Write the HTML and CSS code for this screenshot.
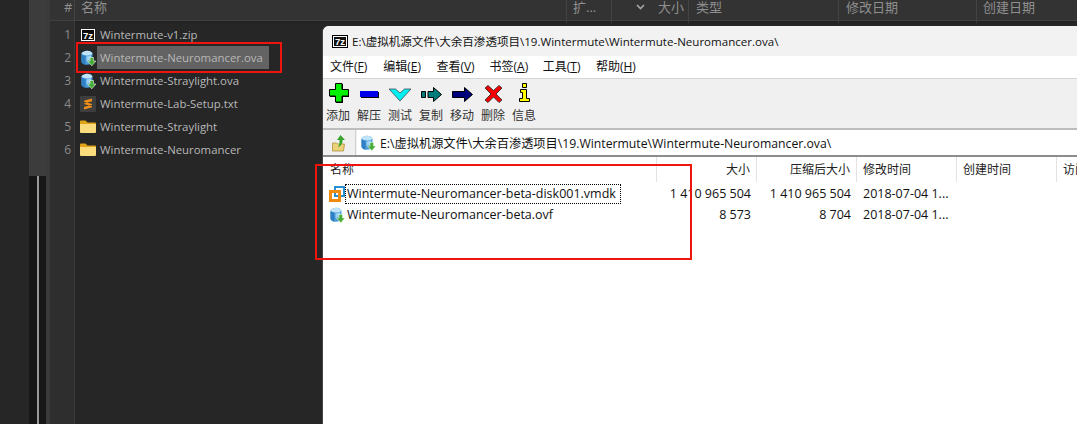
FILE: index.html
```html
<!DOCTYPE html>
<html lang="zh">
<head>
<meta charset="utf-8">
<title>Wintermute</title>
<link rel="stylesheet" href="styles.css">
</head>
<body>
<svg class="defs" width="0" height="0">
  <defs>
    <g id="pkg">
      <path d="M1.500 4Q1.500 2.500 3 2Q7 0 10.500 1.500Q12.500 2.300 12.500 4V11.500Q12.500 13 11 13.700Q7 15.800 3 13.700Q1.500 13 1.500 11.500z" fill="#4f9fdc"/>
      <path d="M1.500 4Q1.500 2.500 3 2Q7 0 10.500 1.500Q12.500 2.300 12.500 4Q7 7 1.500 4z" fill="#bfe3f8"/>
      <path d="M1.500 4Q3.500 5.500 5.500 5.700V14.800Q4 14.500 3 13.700Q1.500 13 1.500 11.500z" fill="#2f7fc4"/>
      <path d="M6.500 6.500Q9 6.300 11 5.200V9L6.500 11z" fill="#9dd2f2"/>
      <path d="M10 7.500h3.500v3.500H16L11.800 15.800 7.500 11H10z" fill="#45ad38" stroke="#e8f6e4" stroke-width="0.600"/>
    </g>
    <g id="folder">
      <path d="M0 2.500a1 1 0 0 1 1-1h4.500l2 2H15a1 1 0 0 1 1 1V6H0z" fill="#e0a516"/>
      <path d="M0 5h16v8a1 1 0 0 1-1 1H1a1 1 0 0 1-1-1z" fill="#fbdc7c"/>
    </g>
  </defs>
</svg>

<div class="desk">
  <div class="leftpad"></div>
  <div class="scroll"><div class="thumb"></div><div class="track"><div class="trackline"></div></div></div>
  <div class="gutter"></div>
  <div class="explorer">
    <div class="xhead">
      <div class="xh c-num">#</div>
      <div class="xh c-name">名称</div>
      <div class="xh c-ext">扩...</div>
      <div class="xh c-size"><svg class="chev" width="9" height="6" viewBox="0 0 9 6"><path d="M1 1l3.500 3.500L8 1" fill="none" stroke="#a8a8a8" stroke-width="1.600"/></svg><span>大小</span></div>
      <div class="xh c-type">类型</div>
      <div class="xh c-mod">修改日期</div>
      <div class="xh c-created">创建日期</div>
    </div>
    <div class="xstrip">
      <div class="sx c-num"></div><div class="sx c-name"></div><div class="sx c-ext"></div><div class="sx c-size"></div><div class="sx c-type"></div><div class="sx c-mod"></div>
    </div>
    <div class="xbody">
      <div class="nums">
        <div class="num">1</div><div class="num">2</div><div class="num">3</div><div class="num">4</div><div class="num">5</div><div class="num">6</div>
      </div>
      <div class="files">
        <div class="file"><svg class="ficon" viewBox="0 0 16 16"><rect x="1" y="2" width="14" height="12" fill="#fff"/><rect x="2" y="3" width="12" height="10" fill="#0c0c0c"/><text class="sevenz" x="8" y="11.500" text-anchor="middle">7z</text></svg><span class="fname">Wintermute-v1.zip</span></div>
        <div class="file"><svg class="ficon" viewBox="0 0 16 16"><use href="#pkg"/></svg><span class="fname sel">Wintermute-Neuromancer.ova</span></div>
        <div class="file"><svg class="ficon" viewBox="0 0 16 16"><use href="#pkg"/></svg><span class="fname">Wintermute-Straylight.ova</span></div>
        <div class="file"><svg class="ficon" viewBox="0 0 16 16"><rect width="16" height="16" rx="1" fill="#3e3e3e"/><path d="M4 4.800L12 2.500V5.300L4 7.600zM4 8L12 10.300V8L4 5.700zM4 11L12 8.700V11.200L4 13.500z" fill="#f28f16"/></svg><span class="fname">Wintermute-Lab-Setup.txt</span></div>
        <div class="file"><svg class="ficon" viewBox="0 0 16 16"><use href="#folder"/></svg><span class="fname">Wintermute-Straylight</span></div>
        <div class="file"><svg class="ficon" viewBox="0 0 16 16"><use href="#folder"/></svg><span class="fname">Wintermute-Neuromancer</span></div>
      </div>
    </div>
  </div>
</div>

<section class="win">
  <div class="titlebar">
    <svg class="ticon" width="16" height="13" viewBox="0 0 16 13"><rect x="0.500" y="0.500" width="15" height="12" fill="#fff" stroke="#000"/><rect x="2" y="2" width="12" height="9" fill="#111"/><text class="sevenz" x="8" y="10" text-anchor="middle">7z</text></svg>
    <span>E:\虚拟机源文件\大余百渗透项目\19.Wintermute\Wintermute-Neuromancer.ova\</span>
  </div>
  <nav class="menubar">
    <span class="menu">文件(<u>F</u>)</span>
    <span class="menu">编辑(<u>E</u>)</span>
    <span class="menu">查看(<u>V</u>)</span>
    <span class="menu">书签(<u>A</u>)</span>
    <span class="menu">工具(<u>T</u>)</span>
    <span class="menu">帮助(<u>H</u>)</span>
  </nav>
  <div class="toolbar">
    <div class="tool"><svg width="24" height="24" viewBox="0 0 24 24"><path d="M10 2h7v6h6v7h-6v6h-7v-6H4V8h6z" fill="#000"/><path d="M9.500 1.500h6.500v6h6.500v6.500H16v6H9.500v-6h-6V7.500h6z" fill="#00f000" stroke="#000"/></svg><span>添加</span></div>
    <div class="tool"><svg width="24" height="24" viewBox="0 0 24 24"><path d="M4 10h18v6H4z" fill="#000"/><path d="M3 9h18v6H3z" fill="#0000e8"/></svg><span>解压</span></div>
    <div class="tool"><svg width="24" height="24" viewBox="0 0 24 24"><path d="M1 7h6.500L12 11l4.500-4H23L12 19z" fill="#00f0f0" stroke="#445" stroke-width="0.800"/></svg><span>测试</span></div>
    <div class="tool"><svg width="24" height="24" viewBox="0 0 24 24"><path d="M2.500 9.500h4v6h-4zM9 9.500h5.500V5.500L22.500 12.500l-8 7v-4H9z" fill="#007c7c" stroke="#000"/></svg><span>复制</span></div>
    <div class="tool"><svg width="24" height="24" viewBox="0 0 24 24"><path d="M2.500 9.500h12V5.500l8 7-8 7v-4h-12z" fill="#00007c" stroke="#000"/></svg><span>移动</span></div>
    <div class="tool"><svg width="24" height="24" viewBox="0 0 24 24"><path d="M7 3.500l5.500 5 5.500-5 3 2.500-6 6 6 6-3 2.500-5.500-5.500L7 20.500 4 18l6-6-6-6z" fill="#f40000" stroke="#222" stroke-width="0.800"/></svg><span>删除</span></div>
    <div class="tool"><svg width="24" height="24" viewBox="0 0 24 24"><path d="M10.500 1.500h4v4h-4zM8.500 7.500h6v9h3v3h-10v-3h3v-6h-2z" fill="#ffff00" stroke="#000"/></svg><span>信息</span></div>
  </div>
  <div class="addrrow">
    <div class="upbtn"><svg width="16" height="18" viewBox="0 0 16 18"><path d="M1.500 9h4l1 1h7l-1 7h-11z" fill="#ecd27a" stroke="#b0923a" stroke-width="0.800"/><path d="M9.500 1l4.500 5h-2.500Q12 11 7 13.500 9 10 8.500 6H6z" fill="#38a52c"/></svg></div>
    <div class="addr"><svg class="aicon" viewBox="0 0 16 16"><use href="#pkg"/></svg><span>E:\虚拟机源文件\大余百渗透项目\19.Wintermute\Wintermute-Neuromancer.ova\</span></div>
  </div>
  <div class="list">
    <div class="lhead">
      <div class="lh l-name">名称</div>
      <div class="lh l-size">大小</div>
      <div class="lh l-packed">压缩后大小</div>
      <div class="lh l-mod">修改时间</div>
      <div class="lh l-created">创建时间</div>
      <div class="lh l-access">访问</div>
    </div>
    <div class="lrow">
      <div class="l-name cell"><svg class="licon" viewBox="0 0 16 16"><rect x="6" y="1" width="9" height="9" fill="none" stroke="#2a8fd0" stroke-width="2"/><rect x="1.500" y="5.500" width="9" height="9" fill="none" stroke="#f08a10" stroke-width="3"/></svg><span class="lname focus">Wintermute-Neuromancer-beta-disk001.vmdk</span></div>
      <div class="l-size cell">1 410 965 504</div>
      <div class="l-packed cell">1 410 965 504</div>
      <div class="l-mod cell">2018-07-04 1...</div>
    </div>
    <div class="lrow">
      <div class="l-name cell"><svg class="licon" viewBox="0 0 16 16"><use href="#pkg"/></svg><span class="lname">Wintermute-Neuromancer-beta.ovf</span></div>
      <div class="l-size cell">8 573</div>
      <div class="l-packed cell">8 704</div>
      <div class="l-mod cell">2018-07-04 1...</div>
    </div>
  </div>
</section>

<div class="mark mark-a"></div>
<div class="mark mark-b"></div>
</body>
</html>
```
FILE: styles.css
```css
* { box-sizing: border-box; }
html, body { margin: 0; height: 100%; overflow: hidden; }
body {
  width: 1077px; height: 424px; position: relative; background: #262626;
  font-family: "Open Sans", "Noto Sans CJK SC", sans-serif; font-size: 12px;
}
.defs { position: absolute; }
.sevenz { font-family: "Liberation Sans", sans-serif; font-weight: 700; font-size: 9.500px; fill: #fff; }
.desk { display: flex; height: 424px; }
.leftpad { width: 29px; background: #262626; }
.scroll { width: 17px; display: flex; flex-direction: column; }
.thumb { height: 176px; background: #3c3c3c; }
.track { flex: 1; background: #171717; padding-left: 8px; }
.trackline { width: 2px; height: 100%; background: #9a9a9a; }
.gutter { width: 4px; background: #3a3a3a; }
.explorer { flex: 1; display: flex; flex-direction: column; }
.xhead { height: 20px; display: flex; background: #333; color: #8f8f8f; font-size: 13px; line-height: 15px; }
.xh { border-right: 1px solid #444; padding-left: 6px; height: 20px; white-space: nowrap; }
.c-num { width: 25px; padding-left: 14px; }
.c-name { width: 492px; }
.c-ext { width: 45px; }
.c-size { width: 77px; display: flex; justify-content: flex-end; gap: 13px; padding-right: 4px; }
.chev { margin-top: 4px; }
.c-type { width: 150px; padding-left: 7px; }
.c-mod { width: 138px; padding-left: 7px; }
.c-created { flex: 1; border-right: 0; }
.xstrip { height: 6px; background: #232323; border-top: 1px solid #404040; display: flex; }
.sx { border-right: 1px solid #3a3a3a; }
.sx.c-num { background: #2e2e2e; }
.xbody { flex: 1; display: flex; min-height: 0; }
.nums { width: 25px; background: #2e2e2e; border-right: 1px solid #3b3b3b; color: #8a8a8a; text-align: right; padding-right: 3px; }
.num { height: 23px; line-height: 23px; font-size: 12px; position: relative; top: -3px; }
.files { flex: 1; background: #262626; margin-top: -3px; }
.file { height: 23px; display: flex; align-items: center; padding-left: 5px; color: #b8b8b8; }
.ficon { width: 16px; height: 16px; margin-right: 1px; flex: none; }
.fname { font-size: 11.400px; padding: 0 0 0 3px; line-height: 23px; white-space: nowrap; }
.sel { background: #636363; width: 172px; }
.win {
  position: absolute; left: 323px; top: 26px; width: 754px; height: 398px;
  background: #fff; border-radius: 6px 0 0 0; display: flex; flex-direction: column; color: #111;
  box-shadow: -1px 0 0 #444;
}
.titlebar { height: 30px; background: #f2f2f2; display: flex; align-items: center; gap: 4px; padding-left: 9px; border-radius: 6px 0 0 0; font-size: 11.550px; white-space: nowrap; }
.menubar { height: 20px; background: #fff; display: flex; align-items: center; padding-left: 7px; font-size: 12px; }
.menu { width: 53.200px; white-space: nowrap; }
.toolbar { height: 50px; margin-top: 2px; background: #f0f0f0; border-top: 1px solid #d4d4d4; display: flex; gap: 1px; padding-top: 3px; }
.tool { width: 30px; display: flex; flex-direction: column; align-items: center; font-size: 12px; line-height: 15px; color: #333; }
.tool svg { margin-bottom: 2px; }
.addrrow { height: 29px; background: #f0f0f0; display: flex; border-top: 2px solid #bdbdbd; border-bottom: 2px solid #8c8c8c; }
.upbtn { width: 33px; display: flex; align-items: center; justify-content: center; border-right: 1px solid #d0d0d0; }
.addr { flex: 1; margin-left: 1px; background: #fff; display: flex; align-items: center; padding-left: 3px; gap: 4px; font-size: 12.230px; white-space: nowrap; }
.aicon { width: 16px; height: 16px; flex: none; }
.list { flex: 1; background: #fff; }
.lhead { display: flex; height: 25px; align-items: center; color: #222; font-size: 12px; }
.lh { height: 25px; line-height: 25px; border-right: 1px solid #e3e3e3; white-space: nowrap; overflow: hidden; }
.l-name { width: 334px; padding-left: 7px; }
.l-size { width: 100px; text-align: right; padding-right: 6px; }
.l-packed { width: 100px; text-align: right; padding-right: 6px; }
.l-mod { width: 100px; padding-left: 6px; }
.l-created { width: 100px; padding-left: 6px; }
.l-access { width: 20px; padding-left: 6px; border-right: 0; }
.lrow { display: flex; height: 21px; align-items: center; font-size: 12.500px; white-space: nowrap; }
.lhead + .lrow { margin-top: 1px; }
.cell { height: 21px; line-height: 21px; }
.lrow .l-name { display: flex; align-items: center; padding-left: 6px; }
.licon { width: 16px; height: 16px; flex: none; }
.lname { line-height: 20px; padding: 0 5px 0 2px; }
.focus { outline: 1px dotted #000; outline-offset: -1px; }
.mark { position: absolute; border: 2px solid #f0140f; pointer-events: none; }
.mark-a { left: 76px; top: 42px; width: 206px; height: 31px; }
.mark-b { left: 315px; top: 164px; width: 377px; height: 96px; }
```
